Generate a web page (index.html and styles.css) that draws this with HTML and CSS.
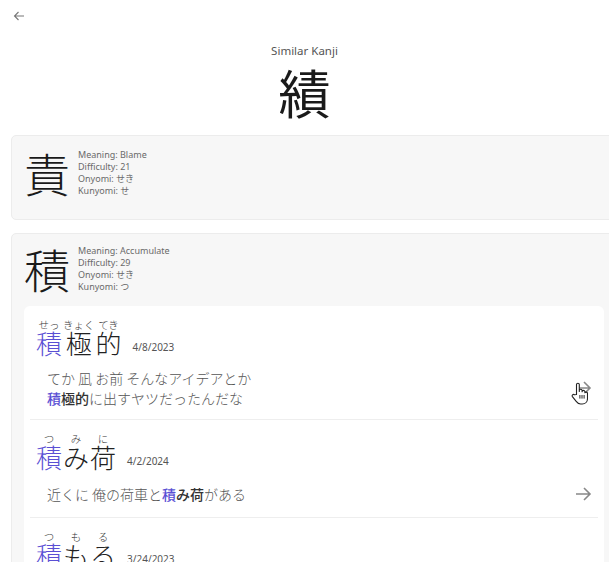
FILE: index.html
```html
<!DOCTYPE html>
<html lang="ja">
<head>
  <meta charset="UTF-8" />
  <title>Similar Kanji</title>
  <link rel="stylesheet" href="styles.css">
</head>
<body>
  <!-- Top bar -->
  <header class="topbar">
    <button class="back-btn" aria-label="Back">
      <svg width="12" height="12" viewBox="0 0 12 12" fill="none" stroke="currentColor" stroke-width="1.1">
        <path d="M11 6H1.5M5.5 2L1.5 6l4 4" />
      </svg>
    </button>
  </header>

  <!-- Heading -->
  <div class="title-block">
    <p class="subtitle">Similar Kanji</p>
    <h1 class="target-kanji">績</h1>
  </div>

  <main class="content">
    <!-- 責 -->
    <section class="kanji-card short">
      <div class="kanji-head">
        <span class="kanji">責</span>
        <ul class="kanji-info">
          <li>Meaning: Blame</li>
          <li>Difficulty: 21</li>
          <li>Onyomi: せき</li>
          <li>Kunyomi: せ</li>
        </ul>
      </div>
    </section>

    <!-- 積 -->
    <section class="kanji-card">
      <div class="kanji-head">
        <span class="kanji">積</span>
        <ul class="kanji-info">
          <li>Meaning: Accumulate</li>
          <li>Difficulty: 29</li>
          <li>Onyomi: せき</li>
          <li>Kunyomi: つ</li>
        </ul>
      </div>

      <div class="word-list">
        <div class="word-row">
          <div class="word-line">
            <span class="word">
              <ruby class="hl">積<rt>せっ</rt></ruby><ruby>極<rt>きょく</rt></ruby><ruby>的<rt>てき</rt></ruby>
            </span>
            <span class="date">4/8/2023</span>
          </div>
          <div class="sentence-row">
            <p class="sentence">てか 凪 お前 そんなアイデアとか<br><b class="hl">積</b><b>極的</b>に出すヤツだったんだな</p>
            <span class="go">
              <svg width="17" height="14" viewBox="0 0 17 14" fill="none" stroke="currentColor" stroke-width="1.6">
                <path d="M1 7h14M9 1l6 6-6 6" />
              </svg>
              <!-- mouse pointer hovering the arrow -->
              <svg class="cursor" width="17" height="23" viewBox="0 0 17 23">
                <path d="M5.5 12.5V2.6a1.4 1.4 0 0 1 2.8 0V9.5V8.6a1.4 1.4 0 0 1 2.8 0v1.2a1.4 1.4 0 0 1 2.8 0v1a1.4 1.4 0 0 1 2.6.6v5c0 3.2-2.2 5.6-5.2 5.6H9.6c-2 0-3.2-.9-4.4-2.6L1.4 14.6a1.4 1.4 0 0 1 2-1.9z" fill="#fff" stroke="#222" stroke-width="1.1" stroke-linejoin="round" />
                <path d="M8.9 13v3.6M11 13v3.6M13.1 13v3.6" stroke="#222" stroke-width="1" />
              </svg>
            </span>
          </div>
        </div>

        <div class="word-row">
          <div class="word-line">
            <span class="word">
              <ruby class="hl">積<rt>つ</rt></ruby><ruby>み<rt>み</rt></ruby><ruby>荷<rt>に</rt></ruby>
            </span>
            <span class="date">4/2/2024</span>
          </div>
          <div class="sentence-row">
            <p class="sentence">近くに 俺の荷車と<b class="hl">積</b><b>み荷</b>がある</p>
            <span class="go">
              <svg width="17" height="14" viewBox="0 0 17 14" fill="none" stroke="currentColor" stroke-width="1.6">
                <path d="M1 7h14M9 1l6 6-6 6" />
              </svg>
            </span>
          </div>
        </div>

        <div class="word-row">
          <div class="word-line">
            <span class="word">
              <ruby class="hl">積<rt>つ</rt></ruby><ruby>も<rt>も</rt></ruby><ruby>る<rt>る</rt></ruby>
            </span>
            <span class="date">3/24/2023</span>
          </div>
          <div class="sentence-row">
            <p class="sentence">雪が<b class="hl">積</b><b>もる</b></p>
          </div>
        </div>
      </div>
    </section>
  </main>
</body>
</html>
```

FILE: styles.css
```css
/* Reset & Body */
* {
  margin: 0;
  padding: 0;
  box-sizing: border-box;
}
body {
  font-family: 'Noto Sans', 'Noto Sans CJK JP', sans-serif;
  background: #fff;
  color: #222;
  overflow: hidden;
  height: 562px;
}

/* Top bar */
.topbar {
  height: 30px;
  padding: 10px 0 0 13px;
}
.back-btn {
  background: none;
  border: none;
  color: #777;
  cursor: pointer;
  display: block;
}

/* Heading */
.title-block {
  text-align: center;
}
.subtitle {
  font-size: 11.5px;
  color: #555;
  line-height: 16px;
  margin-top: 13px;
}
.target-kanji {
  font-family: 'Noto Sans CJK JP', sans-serif;
  font-weight: 400;
  font-size: 52px;
  line-height: 64px;
  margin-top: 1px;
  color: #1a1a1a;
}

/* Cards */
.content {
  padding-left: 11px;
  margin-right: -9px;
  margin-top: 11px;
  display: flex;
  flex-direction: column;
  gap: 13px;
}
.kanji-card {
  background: #f7f7f7;
  border: 1px solid #ececec;
  border-radius: 5px;
  padding: 7px 13px 0 12px;
}
.kanji-card.short {
  height: 85px;
  padding-top: 9px;
}
.kanji-head {
  display: flex;
  align-items: flex-start;
  gap: 8px;
}
.kanji {
  font-family: 'Noto Sans CJK JP', sans-serif;
  font-size: 46px;
  line-height: 54px;
  color: #1a1a1a;
  font-weight: 300;
}
.kanji-info {
  list-style: none;
  font-size: 9px;
  line-height: 12px;
  color: #6a6a6a;
  padding-top: 4px;
}

/* Word list */
.word-list {
  background: #fff;
  border-radius: 6px 6px 0 0;
  margin-top: 11px;
  padding: 0 6px;
}
.word-row {
  border-bottom: 1px solid #eee;
  padding: 13px 6px 11px 6px;
}
.word-line {
  display: flex;
  align-items: flex-end;
  gap: 10px;
}
.word {
  font-family: 'Noto Sans CJK JP', sans-serif;
  font-size: 26px;
  line-height: 28px;
  color: #222;
  font-weight: 300;
}
.word ruby {
  ruby-align: center;
  margin-right: 1px;
}
.word rt {
  font-size: 10.5px;
  color: #333;
  line-height: 12px;
}
.hl {
  color: #5a4fd4;
}
.date {
  font-size: 10px;
  color: #555;
  padding-bottom: 3px;
}
.sentence-row {
  display: flex;
  align-items: center;
  justify-content: space-between;
  margin-top: 11px;
  padding-left: 11px;
}
.sentence {
  font-family: 'Noto Sans CJK JP', sans-serif;
  font-size: 14px;
  line-height: 20px;
  color: #555;
  font-weight: 300;
}
.sentence b {
  font-weight: 500;
  color: #333;
}
.sentence b.hl {
  color: #5a4fd4;
}
.go {
  position: relative;
  height: 24px;
  display: flex;
  align-items: center;
  color: #888;
}
.cursor {
  position: absolute;
  left: -4px;
  top: 6px;
}
```
